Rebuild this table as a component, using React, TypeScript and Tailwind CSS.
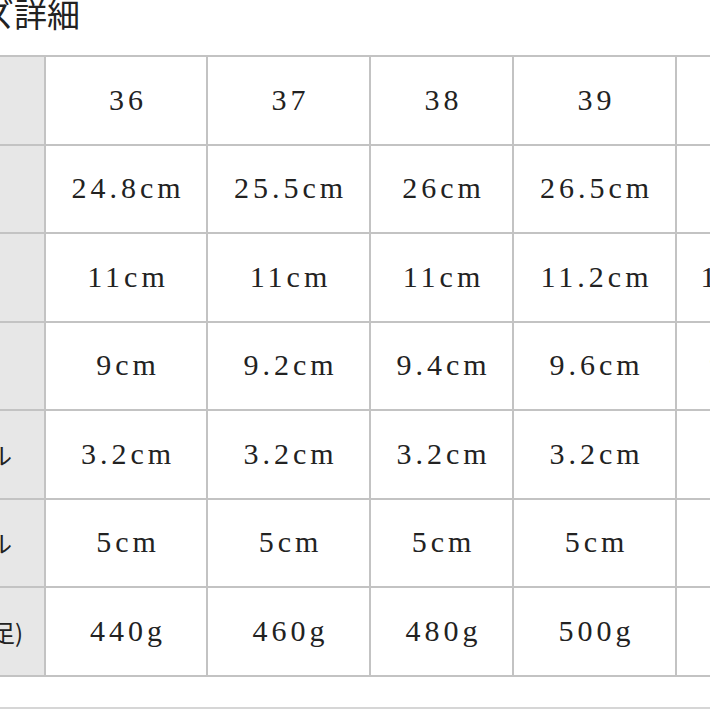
const sizes = [
  { label: "表記", shift: "", values: ["36", "37", "38", "39", "40"] },
  { label: "足長", shift: "", values: ["24.8cm", "25.5cm", "26cm", "26.5cm", "27cm"] },
  { label: "足幅", shift: "", values: ["11cm", "11cm", "11cm", "11.2cm", "11.2cm"] },
  { label: "甲高", shift: "", values: ["9cm", "9.2cm", "9.4cm", "9.6cm", "9.8cm"] },
  { label: "ソール", shift: "", values: ["3.2cm", "3.2cm", "3.2cm", "3.2cm", "3.2cm"] },
  { label: "ヒール", shift: "", values: ["5cm", "5cm", "5cm", "5cm", "5cm"] },
  { label: "重量(片足)", shift: "pr-[18px]", values: ["440g", "460g", "480g", "500g", "520g"] },
];

export default function App() {
  return (
    <div className="w-[710px] h-[710px] overflow-hidden bg-white text-[#222]">
      <h2 className="-ml-[84px] -mt-[3px] whitespace-nowrap font-['Noto_Sans_CJK_JP',sans-serif] text-[33px] font-normal leading-none">
        サイズ詳細
      </h2>

      <div className="mt-[25px] -ml-[92px] w-max bg-[#c3c3c3] py-[2px]">
        <div className="grid grid-cols-[136px_160px_161px_141px_161px_155px] grid-rows-[87px_86px_87px_86px_87px_86px_87px] gap-[2px]">
          {sizes.map((row) => (
            <>
              <div
                key={row.label}
                className={`flex items-center justify-center bg-[#e7e7e7] font-['Noto_Sans_CJK_JP',sans-serif] text-[24px] whitespace-nowrap ${row.shift}`}
              >
                {row.label}
              </div>
              {row.values.map((v, i) => (
                <div
                  key={row.label + i}
                  className="flex items-center justify-center overflow-hidden bg-white pl-[4px] pb-[3px] font-['Liberation_Serif',serif] text-[30px] tracking-[4px] whitespace-nowrap"
                >
                  {v}
                </div>
              ))}
            </>
          ))}
        </div>
      </div>

      <div className="mt-[30px] h-[2px] bg-[#d6d6d6]" />
    </div>
  );
}
